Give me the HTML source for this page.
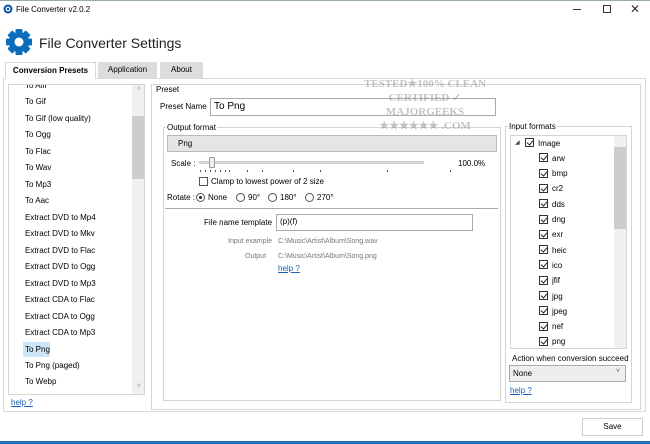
<!DOCTYPE html>
<html><head><style>
*{margin:0;padding:0;box-sizing:border-box}
body{width:650px;height:444px;background:#fff;font-family:"Liberation Sans",sans-serif;font-size:8px;color:#000;position:relative;overflow:hidden}
.a{position:absolute;white-space:nowrap}
.box{position:absolute;border:1px solid #d5d5d5}
.lnk{color:#1a5fb4;text-decoration:underline}
.cb{position:absolute;width:9px;height:9px;border:1px solid #333;background:#fff}
.cb:after{content:"";position:absolute;left:2px;top:0px;width:3px;height:5px;border:solid #222;border-width:0 1.3px 1.3px 0;transform:rotate(40deg)}
.cb.no:after{display:none}
.rd{position:absolute;width:9px;height:9px;border:1px solid #555;border-radius:50%}
.gray{color:#777;font-size:7px}
.tk{position:absolute;top:170px;width:1px;height:2px;background:#555}
</style></head><body>
<div class="a" style="left:0;top:0;width:650px;height:1px;background:#9aa"></div>
<svg class="a" style="left:3px;top:4px" width="10" height="10" viewBox="0 0 10 10"><circle cx="5" cy="5" r="4.5" fill="#0a5aa8"/><circle cx="5" cy="5" r="2.4" fill="#fff"/><circle cx="5" cy="5" r="1.2" fill="#0a5aa8"/></svg>
<div class="a" style="left:16px;top:5px;font-size:8px">File Converter v2.0.2</div>
<div class="a" style="left:573px;top:9px;width:8px;height:1px;background:#333"></div>
<div class="a" style="left:603px;top:5px;width:8px;height:8px;border:1px solid #333"></div>
<div class="a" style="left:630px;top:2px;font-size:12px;color:#333">✕</div>
<svg class="a" style="left:5px;top:28px" width="28" height="28" viewBox="0 0 28 28"><g fill="#0b6ebd" transform="translate(14 14)"><rect x="-3.5" y="-13" width="7" height="26" rx="1"/><rect x="-3.5" y="-13" width="7" height="26" rx="1" transform="rotate(45)"/><rect x="-3.5" y="-13" width="7" height="26" rx="1" transform="rotate(90)"/><rect x="-3.5" y="-13" width="7" height="26" rx="1" transform="rotate(135)"/><circle r="10"/><circle r="4.5" fill="#fff"/></g></svg>
<div class="a" style="left:39px;top:35px;font-size:14px;color:#222">File Converter Settings</div>
<div class="a" style="left:3px;top:78px;width:643px;height:334px;border:1px solid #d9d9d9"></div>
<div class="a" style="left:5px;top:62px;width:91px;height:17px;background:#fff;border:1px solid #d9d9d9;border-bottom:none;font-weight:bold;font-size:8px;text-align:center;line-height:16px">Conversion Presets</div>
<div class="a" style="left:98px;top:62px;width:59px;height:16px;background:#dcdcdc;text-align:center;line-height:16px">Application</div>
<div class="a" style="left:160px;top:62px;width:43px;height:16px;background:#dcdcdc;text-align:center;line-height:16px">About</div>
<div class="box" style="left:8px;top:84px;width:137px;height:311px;overflow:hidden">
<div class="a" style="right:0;top:0;width:12px;height:309px;background:#f0f0f0"></div>
<div class="a" style="right:0;top:31px;width:12px;height:63px;background:#cdcdcd"></div>
<div class="a" style="right:3px;top:1px;color:#999;font-size:7px">˄</div>
<div class="a" style="right:3px;top:298px;color:#999;font-size:7px">˅</div>
</div>
<div class="a" style="left:23px;top:342px;width:27px;height:15px;background:#cde6f7"></div>
<div class="a lnk" style="left:11px;top:398px">help ?</div>
<div class="box" style="left:151px;top:84px;width:490px;height:326px"></div>
<div class="a" style="left:155px;top:85px;background:#fff;padding:0 1px">Preset</div>
<div class="a" style="left:160px;top:102px">Preset Name</div>
<div class="box" style="left:210px;top:98px;width:286px;height:18px;border-color:#aaa;font-size:10px;padding:2px 3px">To Png</div>
<div class="box" style="left:163px;top:127px;width:338px;height:274px"></div>
<div class="a" style="left:166px;top:123px;background:#fff;padding:0 1px">Output format</div>
<div class="box" style="left:167px;top:135px;width:330px;height:17px;background:#e5e5e5;border-color:#bbb;padding:3px 10px">Png</div>
<div class="a" style="left:171px;top:159px">Scale :</div>
<div class="a" style="left:199px;top:161px;width:225px;height:3px;background:#ddd;border:1px solid #ccc"></div>
<div class="a" style="left:209px;top:157px;width:6px;height:11px;background:#eee;border:1px solid #999;border-radius:1px"></div>
<div class="tk" style="left:200px"></div><div class="tk" style="left:205px"></div><div class="tk" style="left:210px"></div><div class="tk" style="left:215px"></div><div class="tk" style="left:220px"></div><div class="tk" style="left:225px"></div><div class="tk" style="left:229px"></div><div class="tk" style="left:247px"></div><div class="tk" style="left:262px"></div><div class="tk" style="left:293px"></div><div class="tk" style="left:320px"></div><div class="tk" style="left:387px"></div><div class="tk" style="left:450px"></div>
<div class="a" style="left:458px;top:159px">100.0%</div>
<div class="cb no" style="left:199px;top:177px;border-color:#555"></div>
<div class="a" style="left:211px;top:177px">Clamp to lowest power of 2 size</div>
<div class="a" style="left:167px;top:193px">Rotate :</div>
<div class="rd" style="left:196px;top:193px"><div style="margin:2px;width:3px;height:3px;border-radius:50%;background:#222"></div></div>
<div class="a" style="left:208px;top:193px">None</div>
<div class="rd" style="left:236px;top:193px"></div><div class="a" style="left:248px;top:193px">90°</div>
<div class="rd" style="left:268px;top:193px"></div><div class="a" style="left:280px;top:193px">180°</div>
<div class="rd" style="left:305px;top:193px"></div><div class="a" style="left:317px;top:193px">270°</div>
<div class="a" style="left:165px;top:208px;width:333px;height:1px;background:#aaa"></div>
<div class="a" style="left:204px;top:218px">File name template</div>
<div class="box" style="left:276px;top:214px;width:197px;height:17px;border-color:#aaa;padding:2px 3px">(p)(f)</div>
<div class="a gray" style="left:228px;top:238px">Input example</div>
<div class="a gray" style="left:278px;top:238px">C:\Music\Artist\Album\Song.wav</div>
<div class="a gray" style="left:245px;top:253px">Output</div>
<div class="a gray" style="left:278px;top:253px">C:\Music\Artist\Album\Song.png</div>
<div class="a lnk" style="left:278px;top:264px">help ?</div>
<div class="a" style="left:355px;top:77px;width:140px;height:60px;opacity:.5;color:#888;font-weight:bold;font-family:'Liberation Serif',serif;font-size:11px;text-align:center;line-height:14px">TESTED★100% CLEAN<br>CERTIFIED ✓<br>MAJORGEEKS<br>★★★★★★ .COM</div>
<div class="box" style="left:505px;top:126px;width:127px;height:277px"></div>
<div class="a" style="left:508px;top:122px;background:#fff;padding:0 1px">Input formats</div>
<div class="box" style="left:510px;top:135px;width:117px;height:214px"></div>
<div class="a" style="left:614px;top:136px;width:12px;height:212px;background:#f0f0f0"></div>
<div class="a" style="left:614px;top:147px;width:12px;height:82px;background:#cdcdcd"></div>
<div class="a" style="left:515px;top:139px;font-size:6px;color:#444">◢</div>
<div class="a" style="left:512px;top:354px">Action when conversion succeed</div>
<div class="box" style="left:509px;top:365px;width:117px;height:17px;background:#eee;border-color:#aaa;padding:3px 3px">None<span style="position:absolute;right:5px;top:2px;color:#666;font-size:7px">˅</span></div>
<div class="a lnk" style="left:510px;top:386px">help ?</div>
<div class="box" style="left:582px;top:418px;width:61px;height:18px;border-color:#ccc;text-align:center;line-height:16px">Save</div>
<div class="a" style="left:0;top:441px;width:650px;height:3px;background:#1e6fb8"></div>
<script>
var L=["To Aiff","To Gif","To Gif (low quality)","To Ogg","To Flac","To Wav","To Mp3","To Aac","Extract DVD to Mp4","Extract DVD to Mkv","Extract DVD to Flac","Extract DVD to Ogg","Extract DVD to Mp3","Extract CDA to Flac","Extract CDA to Ogg","Extract CDA to Mp3","To Png","To Png (paged)","To Webp"];
var h="";L.forEach(function(t,i){var y=81+i*16.47;h+='<div class="a" style="left:25px;top:'+y+'px">'+t+'</div>'});
h='<div style="position:absolute;left:9px;top:85px;width:122px;height:309px;overflow:hidden"><div style="position:absolute;left:-9px;top:-85px">'+h+'</div></div>';
var f=["Image","arw","bmp","cr2","dds","dng","exr","heic","ico","jfif","jpg","jpeg","nef","png"];
f.forEach(function(t,i){var y=138+i*15.3;var x=i==0?525:539;h+='<div class="cb" style="left:'+x+'px;top:'+y+'px"></div><div class="a" style="left:'+(x+13)+'px;top:'+(y+0.5)+'px">'+t+'</div>'});
document.body.insertAdjacentHTML("beforeend",h);
</script>
</body></html>
